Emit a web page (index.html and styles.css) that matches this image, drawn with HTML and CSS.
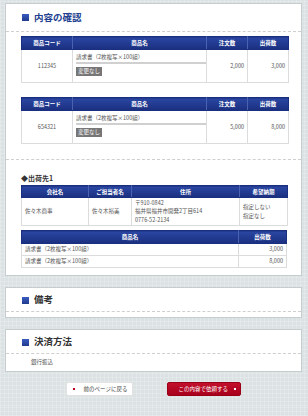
FILE: index.html
```html
<!DOCTYPE html>
<html lang="ja">
<head>
  <meta charset="UTF-8" />
  <title>内容の確認</title>
  <link rel="stylesheet" href="styles.css">
</head>
<body>
  <div class="page">

    <section class="panel panel-main">
      <h2 class="panel-title"><span class="mark"></span>内容の確認</h2>
      <div class="panel-body items">
        <table class="grid order">
          <tr>
            <th class="c-code">商品コード</th>
            <th class="c-name">商品名</th>
            <th class="c-num">注文数</th>
            <th class="c-num">出荷数</th>
          </tr>
          <tr>
            <td class="center">112345</td>
            <td class="name-cell">
              <div class="item-name">請求書（2枚複写×100組）</div>
              <div class="rule"></div>
              <span class="badge">変更なし</span>
            </td>
            <td class="right">2,000</td>
            <td class="right">3,000</td>
          </tr>
        </table>

        <table class="grid order">
          <tr>
            <th class="c-code">商品コード</th>
            <th class="c-name">商品名</th>
            <th class="c-num">注文数</th>
            <th class="c-num">出荷数</th>
          </tr>
          <tr>
            <td class="center">654321</td>
            <td class="name-cell">
              <div class="item-name">請求書（2枚複写×100組）</div>
              <div class="rule"></div>
              <span class="badge">変更なし</span>
            </td>
            <td class="right">5,000</td>
            <td class="right">8,000</td>
          </tr>
        </table>
      </div>

      <div class="panel-body ship">
        <h3 class="ship-title">◆出荷先1</h3>
        <table class="grid dest">
          <tr>
            <th class="d-company">会社名</th>
            <th class="d-person">ご担当者名</th>
            <th class="d-addr">住所</th>
            <th class="d-date">希望納期</th>
          </tr>
          <tr>
            <td>佐々木商事</td>
            <td>佐々木裕美</td>
            <td class="addr">〒910-0842<br>福井県福井市開発2丁目614<br>0776-52-2134</td>
            <td class="addr">指定しない<br>指定なし</td>
          </tr>
        </table>

        <table class="grid lines">
          <tr>
            <th>商品名</th>
            <th class="d-date">出荷数</th>
          </tr>
          <tr>
            <td>請求書（2枚複写×100組）</td>
            <td class="right">3,000</td>
          </tr>
          <tr>
            <td>請求書（2枚複写×100組）</td>
            <td class="right">8,000</td>
          </tr>
        </table>
      </div>
    </section>

    <section class="panel panel-note">
      <h2 class="panel-title"><span class="mark"></span>備考</h2>
      <div class="panel-body note"></div>
    </section>

    <section class="panel panel-pay">
      <h2 class="panel-title"><span class="mark"></span>決済方法</h2>
      <div class="panel-body pay">銀行振込</div>
    </section>

    <div class="actions">
      <a class="btn btn-back" href="#"><span class="dot"></span>前のページに戻る</a>
      <a class="btn btn-submit" href="#">この内容で依頼する<span class="dot"></span></a>
    </div>

  </div>
</body>
</html>
```

FILE: styles.css
```css
* {
  margin: 0;
  padding: 0;
  box-sizing: border-box;
}

body {
  font-family: "Noto Sans CJK JP", "Noto Sans", sans-serif;
  color: #555;
  background-color: #dce2e3;
  background-image:
    repeating-linear-gradient(0deg, rgba(255,255,255,0.18) 0 1px, transparent 1px 4px),
    repeating-linear-gradient(90deg, rgba(255,255,255,0.18) 0 1px, transparent 1px 4px);
}

.page {
  padding: 3px 6px 10px 5px;
}

.panel {
  background: #fff;
  border: 1px solid #c6cdcf;
  margin-bottom: 11px;
}

.panel-pay {
  margin-bottom: 10px;
}

.panel-title {
  display: flex;
  align-items: center;
  gap: 5px;
  padding-left: 16px;
  height: 28px;
  border-bottom: 1px dashed #cfcfcf;
  font-size: 9.5px;
  font-weight: bold;
  color: #233f8f;
  line-height: 1;
}

.panel-note .panel-title,
.panel-pay .panel-title {
  height: 24px;
  padding-top: 1px;
  color: #333;
}

.mark {
  width: 7px;
  height: 7px;
  background: linear-gradient(#3a5cc0, #1f3a8e);
}

.panel-body {
  padding: 0 15px;
}

.items {
  padding-top: 4px;
  padding-bottom: 15px;
  border-bottom: 1px dashed #cfcfcf;
}

.note {
  height: 5px;
}

.pay {
  height: 17px;
  padding-left: 25px;
  font-size: 5.5px;
  line-height: 17px;
  color: #555;
}

/* tables */
.grid {
  width: 266px;
  border-collapse: collapse;
  table-layout: fixed;
  font-size: 5.5px;
}

.grid th {
  height: 13px;
  background: linear-gradient(#2b47a3, #1a2f7f);
  color: #fff;
  font-weight: bold;
  text-align: center;
  border: 1px solid #4a62b0;
  border-top-color: #1a2f7f;
  border-bottom-color: #1a2f7f;
  padding: 0;
}

.grid th:first-child {
  border-left-color: #1a2f7f;
}

.grid th:last-child {
  border-right-color: #1a2f7f;
}

.grid td {
  border: 1px solid #dcdcdc;
  color: #555;
  padding: 0 3px;
  vertical-align: middle;
  line-height: 1.5;
}

.order + .order {
  margin-top: 14px;
}

.c-code { width: 51px; }
.c-name { width: 134px; }
.c-num { width: 41px; }

.order td {
  height: 33px;
}

.center { text-align: center; }
.right { text-align: right; }

.name-cell {
  vertical-align: top !important;
  padding-top: 2px !important;
}

.item-name {
  height: 10px;
  line-height: 10px;
}

.rule {
  width: 130px;
  height: 2px;
  background: #d0d0d0;
  margin-bottom: 3px;
}

.badge {
  display: inline-block;
  background: #767676;
  color: #fff;
  padding: 0 2px;
  height: 9px;
  line-height: 9px;
  font-size: 5.5px;
}

/* shipping */
.ship {
  padding-top: 12px;
  padding-bottom: 7px;
}

.ship-title {
  font-size: 7px;
  font-weight: bold;
  color: #333;
  height: 13px;
  line-height: 13px;
}

.d-company { width: 67px; }
.d-person { width: 43px; }
.d-addr { width: 108px; }
.d-date { width: 48px; }

.dest th {
  height: 12px;
}

.dest td {
  height: 28px;
  line-height: 8.5px;
}

.lines {
  margin-top: 4px;
}

.lines td {
  height: 12px;
  line-height: 1;
}

/* buttons */
.actions {
  display: flex;
  justify-content: center;
  gap: 34px;
  padding-right: 1px;
}

.btn {
  display: flex;
  align-items: center;
  height: 14px;
  font-size: 5.5px;
  text-decoration: none;
  border-radius: 2px;
}

.btn-back {
  width: 67px;
  background: #fff;
  color: #444;
  border: 1px solid #e2e2e2;
  padding-left: 6px;
  gap: 9px;
}

.btn-back .dot {
  width: 2px;
  height: 2px;
  background: #c00020;
}

.btn-submit {
  width: 74px;
  background: linear-gradient(#c2102c, #a8001b);
  color: #fff;
  border: 1px solid #9a0018;
  padding-left: 11px;
  gap: 6px;
}

.btn-submit .dot {
  width: 2px;
  height: 2px;
  background: #fff;
}
```
